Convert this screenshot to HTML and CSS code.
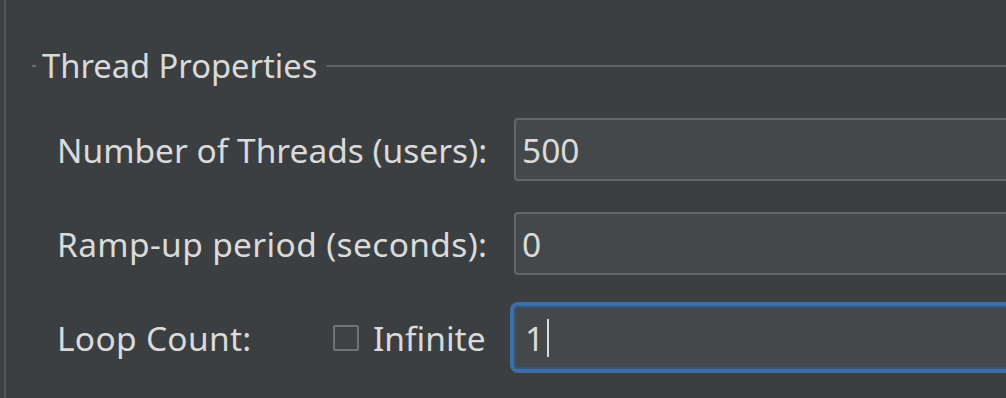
FILE: index.html
```html
<!DOCTYPE html>
<html lang="en">
<head>
    <meta charset="UTF-8">
    <title>Thread Group</title>
    <link rel="stylesheet" href="styles.css">
</head>
<body>
    <div class="panel">
        <div class="titled">
            <span class="tick"></span>
            <span class="title">Thread Properties</span>
            <span class="rule"></span>
        </div>

        <div class="form">
            <div class="row">
                <label class="label" for="threads">Number of Threads (users):</label>
                <div class="field"><span class="value">500</span></div>
            </div>
            <div class="row">
                <label class="label" for="rampup">Ramp-up period (seconds):</label>
                <div class="field"><span class="value">0</span></div>
            </div>
            <div class="row">
                <div class="label loop">
                    <span class="loop-text">Loop Count:</span>
                    <span class="check"><span class="box"></span>Infinite</span>
                </div>
                <div class="field focused"><span class="value">1</span><span class="caret"></span></div>
            </div>
        </div>
    </div>
</body>
</html>
```

FILE: styles.css
```css
:root {
    --background: #3c3f41;
    --edge: #515457;
    --text: #dadada;
    --field: #45484b;
    --field-border: #64676a;
    --focus: #3d6ea5;
}

* {
    margin: 0;
    padding: 0;
    box-sizing: border-box;
}

html, body {
    height: 100%;
}

body {
    font-family: 'Noto Sans', 'Open Sans', sans-serif;
    font-size: 33.5px;
    background-color: var(--background);
    color: var(--text);
    overflow: hidden;
}

.panel {
    margin-left: 4px;
    height: 100%;
    padding-top: 48px;
    border-left: 2px solid var(--edge);
}

.titled {
    display: flex;
    align-items: center;
    height: 36px;
    padding-left: 26px;
}

.tick {
    width: 4px;
    height: 2px;
    background: #6a6d70;
}

.title {
    font-size: 32.7px;
    line-height: 36px;
    margin-left: 6px;
    white-space: nowrap;
}

.rule {
    flex: 1;
    height: 2px;
    margin-left: 9px;
    background: #5f6265;
}

.form {
    margin-top: 34px;
    display: flex;
    flex-direction: column;
    gap: 31px;
}

.row {
    display: flex;
    align-items: center;
    height: 63px;
}

.label {
    flex: 0 0 508px;
    padding-left: 51px;
    white-space: nowrap;
}

.label[for="rampup"] {
    letter-spacing: 0.35px;
}

.loop {
    display: flex;
    align-items: center;
}

.loop-text {
    flex: 0 0 276px;
    letter-spacing: 0.3px;
}

.check {
    display: flex;
    align-items: center;
    gap: 14px;
}

.box {
    width: 26px;
    height: 26px;
    border: 2px solid #707376;
    border-radius: 2px;
    background: #3f4244;
}

.field {
    flex: 1;
    height: 63px;
    display: flex;
    align-items: center;
    padding-left: 6px;
    background: var(--field);
    border: 2px solid var(--field-border);
    border-right: none;
    border-radius: 4px 0 0 4px;
}

.field.focused {
    border-color: #2f5580;
    box-shadow: 0 0 0 4px var(--focus);
    padding-left: 9px;
}

.caret {
    width: 2px;
    height: 38px;
    margin-left: 3px;
    background: var(--text);
}
```
